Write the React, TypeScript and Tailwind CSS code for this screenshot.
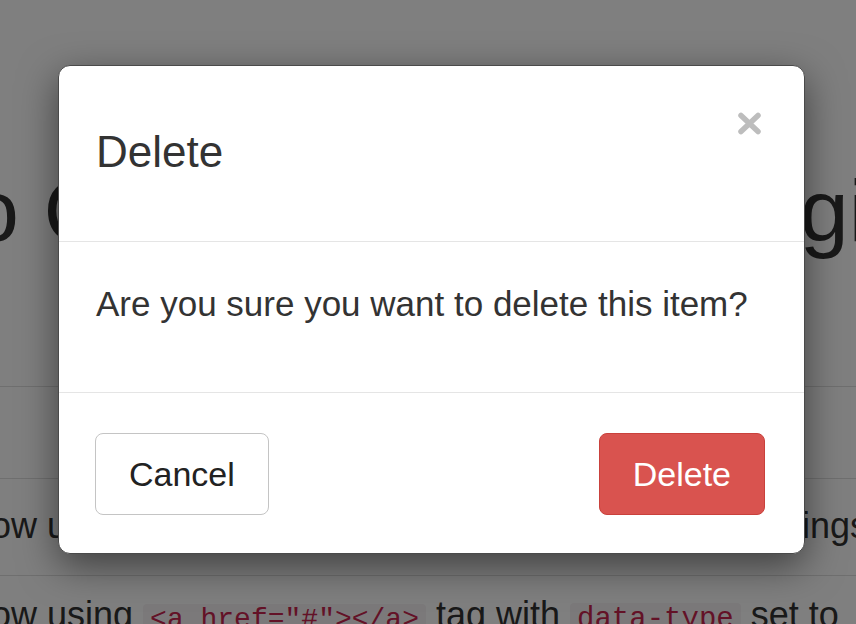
export default function App() {
  return (
    <div className="relative h-[624px] w-[856px] overflow-hidden bg-white font-['Liberation_Sans',Arial,sans-serif] text-[#333]">
      {/* page behind the modal */}
      <div className="pt-[163px]">
        <h1 className="flex whitespace-nowrap text-[88px] leading-[1.1] font-normal">
          <span className="-ml-[30px] shrink-0">o Con</span>
          <span className="ml-[595px] shrink-0">gi<span className="text-[#7a1f2b]">n</span></span>
        </h1>
      </div>

      <div className="mt-[126px] text-[36px]">
        <div className="h-[92px] border-t border-[#dedede]" />
        <div className="flex h-[97px] whitespace-nowrap border-t border-[#dedede] pt-[21px] leading-[51px]">
          <span className="-ml-[9px] shrink-0">ow using confirm</span>
          <span className="ml-auto -mr-[22px] shrink-0">ings:</span>
        </div>
        <div className="flex whitespace-nowrap border-t border-[#dedede] pt-[13px] leading-[51px]">
          <span className="-ml-[9px] shrink-0">
            ow using{" "}
            <code className="rounded bg-[#f7f3f4] px-[7px] font-['Liberation_Mono',monospace] text-[28px] text-[#c7254e]">
              &lt;a href="#"&gt;&lt;/a&gt;
            </code>{" "}
            {" "}tag with{" "}
            <code className="rounded bg-[#f7f3f4] px-[7px] font-['Liberation_Mono',monospace] text-[29px] text-[#c7254e]">
              data-type
            </code>{" "}
            set to
          </span>
        </div>
      </div>

      {/* backdrop */}
      <div className="absolute inset-0 bg-black/50" />

      {/* modal */}
      <div className="absolute left-[58px] top-[65px] w-[747px] rounded-[12px] border border-[#4a4a4a] bg-white shadow-[0_12px_38px_rgba(0,0,0,0.5)]">
        <div className="flex h-[176px] justify-between border-b border-[#e5e5e5] pl-[37px] pr-[42px]">
          <h4 className="pt-[64px] text-[44px] leading-none font-normal text-[#333]">Delete</h4>
          <button className="mt-[46px] h-[23px] w-[25px]" aria-label="Close">
            <svg viewBox="0 0 25 23" className="h-[23px] w-[25px]">
              <path d="M4 3.5 L21 19.5 M21 3.5 L4 19.5" stroke="#bdbdbd" strokeWidth="5.5" strokeLinecap="round" />
            </svg>
          </button>
        </div>

        <div className="h-[151px] border-b border-[#e5e5e5] pl-[37px] pt-[44px]">
          <p className="text-[35px] leading-none text-[#333]">Are you sure you want to delete this item?</p>
        </div>

        <div className="flex h-[160px] items-start justify-between pl-[36px] pr-[39px] pt-[40px]">
          <button className="flex h-[82px] items-center rounded-[8px] border border-[#c4c4c4] bg-white px-[33px] text-[34px] text-[#222]">
            Cancel
          </button>
          <button className="flex h-[82px] items-center rounded-[8px] border border-[#c9413c] bg-[#d9534f] px-[33px] text-[34px] text-white">
            Delete
          </button>
        </div>
      </div>
    </div>
  );
}
